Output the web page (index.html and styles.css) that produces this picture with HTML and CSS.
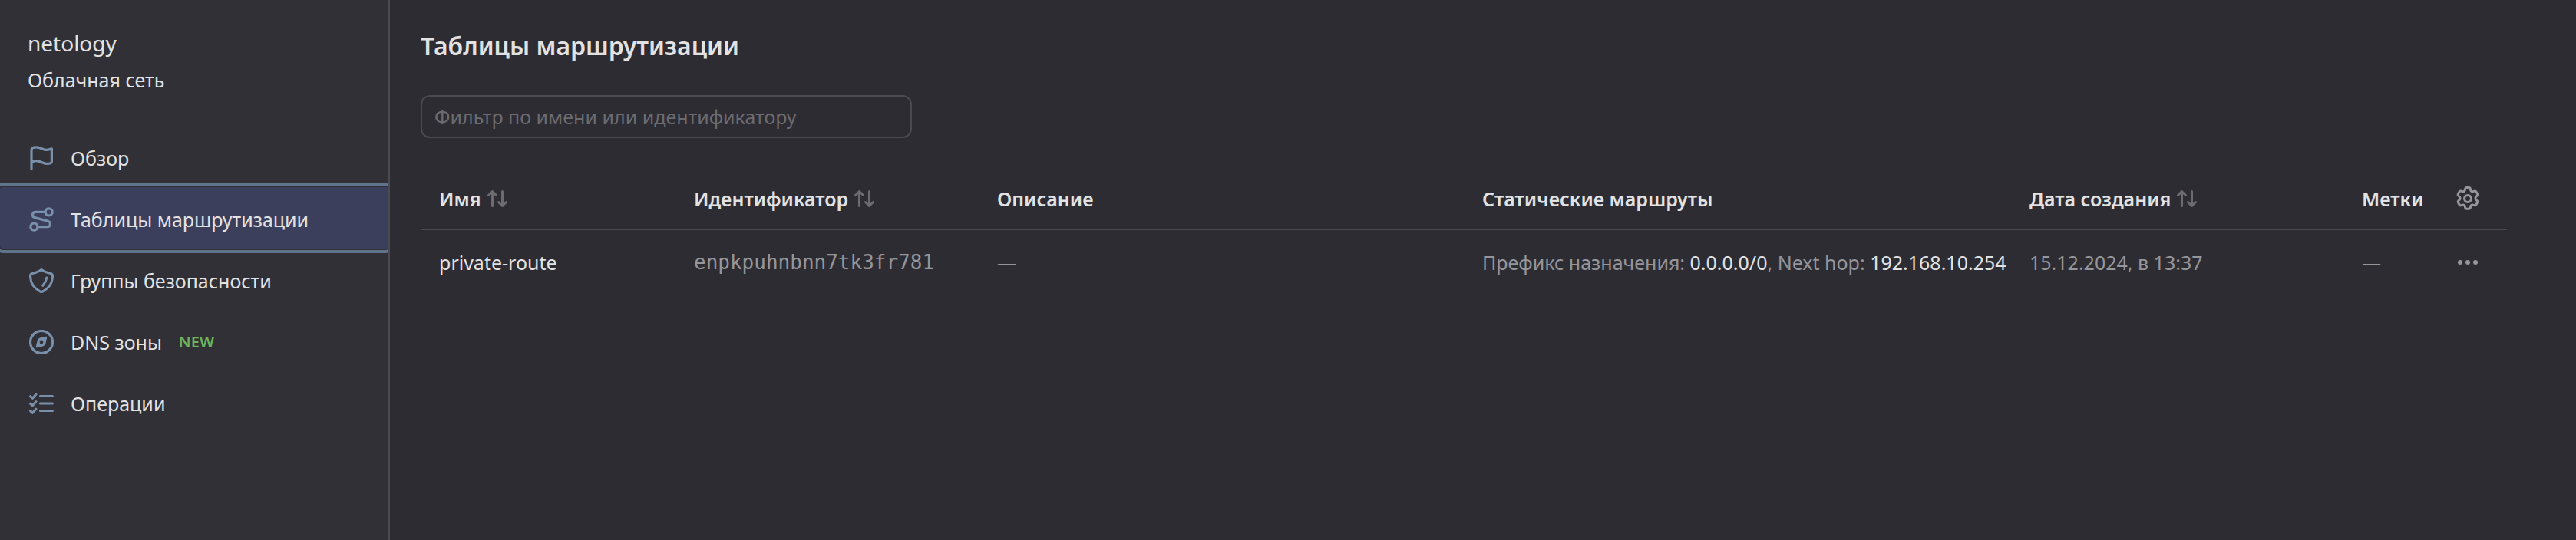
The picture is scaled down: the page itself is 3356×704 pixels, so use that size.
FILE: index.html
```html
<!DOCTYPE html>
<html lang="ru">
<head>
<meta charset="utf-8">
<title>Таблицы маршрутизации</title>
<link rel="stylesheet" href="styles.css">
</head>
<body>
<div class="app">
  <aside class="sidebar">
    <header class="sidebar-head">
      <div class="folder">netology</div>
      <div class="service">Облачная сеть</div>
    </header>
    <nav class="nav">
      <a class="nav-item" href="#overview">
        <svg class="nav-icon" viewBox="0 0 16 16"><path d="M1.500 15.200V2.600C1.500 1.400 3 .95 4.700.95 7.600.95 8.700 2.700 11.400 2.700c1.300 0 2.200-.3 3.300-.8v8.300c0 1-1.600 1.500-3.300 1.500-2.700 0-4-1.900-6.700-1.900-1.300 0-2.300.3-3.200.9"/></svg>
        <span>Обзор</span>
      </a>
      <a class="nav-item nav-item-active" href="#routes" aria-current="page">
        <svg class="nav-icon" viewBox="0 0 16 16"><circle cx="12.800" cy="3.200" r="2.300"/><circle cx="3.200" cy="12.800" r="2.300"/><path d="M10.500 3.200H4.100a1.850 1.850 0 0 0-.6 3.600l9 2.400a1.850 1.850 0 0 1-.6 3.600H5.500"/></svg>
        <span>Таблицы маршрутизации</span>
      </a>
      <a class="nav-item" href="#security">
        <svg class="nav-icon" viewBox="0 0 16 16"><path d="M8 .75c1.700 1.300 3.700 2 5.900 2.500.8.200 1.350.8 1.350 1.600 0 4.600-2.500 8-6.300 10.100a2 2 0 0 1-1.900 0C3.250 12.850.75 9.450.75 4.850c0-.8.550-1.400 1.350-1.600C4.300 2.750 6.300 2.050 8 .75ZM11.400 6c-.4 2-1.200 3.600-2.500 5.100"/></svg>
        <span>Группы безопасности</span>
      </a>
      <a class="nav-item" href="#dns">
        <svg class="nav-icon" viewBox="0 0 16 16"><circle cx="8" cy="8" r="7.250"/><path class="solid" fill-rule="evenodd" d="M11.100 4.400 7 5.300a2.400 2.400 0 0 0-1.700 1.700L4.400 11c-.1.400.2.700.6.600L9 10.700A2.400 2.400 0 0 0 10.700 9l.9-4c.1-.4-.1-.7-.5-.6ZM8 6.800a1.200 1.200 0 1 1 0 2.400 1.200 1.200 0 0 1 0-2.400Z"/></svg>
        <span>DNS зоны</span>
        <span class="badge">NEW</span>
      </a>
      <a class="nav-item" href="#operations">
        <svg class="nav-icon" viewBox="0 0 16 16"><path d="M7.200 3.250h8M7.200 8h8M7.200 12.750h8M.8 3.400l1.400 1.200 2.200-2.500M.8 8.150l1.400 1.200 2.200-2.500M.8 12.900l1.400 1.200 2.200-2.500"/></svg>
        <span>Операции</span>
      </a>
    </nav>
  </aside>
  <main class="content">
    <h1 class="title">Таблицы маршрутизации</h1>
    <input class="filter" type="text" aria-label="Фильтр по имени или идентификатору" placeholder="Фильтр по имени или идентификатору">
    <table class="routes">
      <colgroup>
        <col class="col-name"><col class="col-id"><col><col class="col-routes"><col class="col-date"><col class="col-labels"><col class="col-actions">
      </colgroup>
      <thead>
        <tr>
          <th scope="col"><button class="sort" type="button">Имя<svg class="sort-icon" viewBox="0 0 26 22"><path d="M6.500 20.500v-19M1.500 6.500l5-5 5 5M19.500 1.500v19M14.500 15.500l5 5 5-5"/></svg></button></th>
          <th scope="col"><button class="sort" type="button">Идентификатор<svg class="sort-icon" viewBox="0 0 26 22"><path d="M6.500 20.500v-19M1.500 6.500l5-5 5 5M19.500 1.500v19M14.500 15.500l5 5 5-5"/></svg></button></th>
          <th scope="col">Описание</th>
          <th scope="col">Статические маршруты</th>
          <th scope="col"><button class="sort" type="button">Дата создания<svg class="sort-icon" viewBox="0 0 26 22"><path d="M6.500 20.500v-19M1.500 6.500l5-5 5 5M19.500 1.500v19M14.500 15.500l5 5 5-5"/></svg></button></th>
          <th scope="col">Метки</th>
          <th scope="col" class="actions"><button class="icon-button" type="button" aria-label="Настройки таблицы"><svg class="gear" viewBox="0 0 16 16"><circle cx="8" cy="8" r="2.250"/><path d="M7.300.75h1.400c.6 0 .9.400 1 .9l.2.900c.1.500.9.950 1.400.8l.9-.3c.5-.2 1 0 1.300.5l.7 1.200c.3.500.2 1-.2 1.400l-.7.700c-.4.400-.4 1.300 0 1.700l.7.700c.4.400.5.900.2 1.400l-.7 1.200c-.3.500-.8.700-1.300.5l-.9-.3c-.5-.150-1.300.3-1.400.8l-.2.9c-.1.500-.4.9-1 .9H7.300c-.6 0-.9-.4-1-.9l-.2-.9c-.1-.5-.9-.950-1.400-.8l-.9.3c-.5.200-1 0-1.300-.5l-.7-1.200c-.3-.5-.2-1 .2-1.400l.7-.7c.4-.4.4-1.300 0-1.700L2 6.150c-.4-.4-.5-.9-.2-1.400l.7-1.200c.3-.5.8-.7 1.300-.5l.9.3c.5.150 1.300-.3 1.400-.8l.2-.9c.1-.5.4-.9 1-.9Z"/></svg></button></th>
        </tr>
      </thead>
      <tbody>
        <tr>
          <td><a class="name" href="#private-route">private-route</a></td>
          <td class="id">enpkpuhnbnn7tk3fr781</td>
          <td>—</td>
          <td>Префикс назначения: <span class="value">0.0.0.0/0</span>, Next hop: <span class="value">192.168.10.254</span></td>
          <td>15.12.2024, в 13:37</td>
          <td>—</td>
          <td class="actions"><button class="icon-button" type="button" aria-label="Действия"><svg class="dots" viewBox="0 0 32 32"><circle cx="6" cy="16" r="3"/><circle cx="16" cy="16" r="3"/><circle cx="26" cy="16" r="3"/></svg></button></td>
        </tr>
      </tbody>
    </table>
  </main>
</div>
</body>
</html>
```
FILE: styles.css
```css
* { box-sizing: border-box; }
body {
  margin: 0;
  background: #2d2c33;
  color: #e2e2e3;
  font: 25px/36px "Noto Sans", sans-serif;
}
a { color: inherit; text-decoration: none; }
button {
  padding: 0;
  border: 0;
  background: none;
  color: inherit;
  font: inherit;
  cursor: pointer;
}
svg {
  display: block;
  flex: none;
  fill: none;
  stroke: currentColor;
  stroke-linecap: round;
  stroke-linejoin: round;
}

.app { display: flex; min-height: 100vh; }

.sidebar {
  flex: none;
  width: 508px;
  border-right: 2px solid #4b4a50;
  background: #313036;
  overflow: hidden;
}
.sidebar-head { padding: 36px 36px 42px; }
.folder { font-size: 28px; line-height: 40px; margin-bottom: 10px; }
.nav-item {
  display: flex;
  align-items: center;
  gap: 22px;
  height: 80px;
  padding: 4px 38px 0;
}
.nav-item-active {
  border-radius: 4px;
  outline: 4px solid #5f748c;
  outline-offset: 2px;
  background: #3c3f5c;
}
.nav-icon { width: 32px; height: 32px; color: #7990ab; stroke-width: 1.6; }
.nav-icon .solid { fill: currentColor; stroke: none; }
.badge { color: #6db35c; font-size: 20px; font-weight: 600; }

.content { flex: 1; min-width: 0; padding: 36px 90px 0 40px; }
.title { margin: 0 0 40px; font-size: 32px; line-height: 48px; font-weight: 600; }
.filter {
  display: block;
  width: 640px;
  height: 56px;
  margin-bottom: 40px;
  padding: 0 16px;
  border: 2px solid #4b4a50;
  border-radius: 12px;
  background: transparent;
  color: inherit;
  font: inherit;
}
.filter::placeholder { color: #6c6b70; opacity: 1; }

.routes { width: 100%; table-layout: fixed; border-collapse: separate; border-spacing: 0; }
.col-name { width: 356px; }
.col-id { width: 395px; }
.col-routes { width: 713px; }
.col-date { width: 433px; }
.col-labels { width: 87px; }
.col-actions { width: 102px; }
.routes th, .routes td { padding: 0; text-align: left; white-space: nowrap; }
.routes th { height: 80px; border-bottom: 2px solid #4b4a50; font-weight: 600; }
.routes td { height: 84px; color: #969599; }
.routes th:first-child, .routes td:first-child { padding-left: 24px; }
.sort { display: inline-flex; align-items: center; gap: 8px; }
.sort-icon { width: 26px; height: 22px; color: #6c6b70; stroke-width: 3; }
.name, .value { color: #e2e2e3; }
.routes .id { font-family: "DejaVu Sans Mono", monospace; font-size: 26px; }
.icon-button { display: block; margin: 0 auto; color: #969599; }
.gear { width: 32px; height: 32px; stroke-width: 1.5; }
.dots { width: 32px; height: 32px; fill: currentColor; stroke: none; }
```
